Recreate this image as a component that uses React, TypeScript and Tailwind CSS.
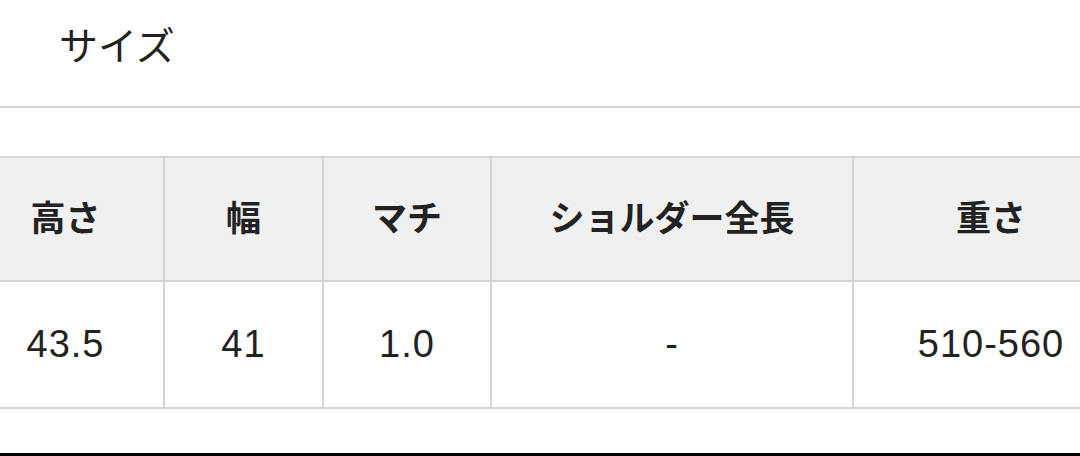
const headers = ["高さ", "幅", "マチ", "ショルダー全長", "重さ"]
const values = ["43.5", "41", "1.0", "-", "510-560"]
const widths = ["w-[197px]", "w-[159px]", "w-[168px]", "w-[362px]", "w-[276px]"]

export default function App() {
    return (
        <div className="w-[1080px] h-[456px] bg-white overflow-hidden flex flex-col text-[#222] font-['Liberation_Sans','Noto_Sans_CJK_JP',sans-serif]">
            <div className="h-[106px] pt-[20px] pl-[59px] text-[39px] leading-[54px]">サイズ</div>
            <div className="h-[2px] bg-[#d4d4d4]" />
            <div className="h-[48px]" />
            <table className="ml-[-34px] w-[1162px] min-w-[1162px] shrink-0 border-collapse table-fixed">
                <colgroup>
                    {widths.map((w, i) => (
                        <col key={i} className={w} />
                    ))}
                </colgroup>
                <thead>
                    <tr className="h-[124px] bg-[#f0f0f0]">
                        {headers.map((h) => (
                            <th key={h} className="border-2 border-[#d4d4d4] text-[35px] font-bold text-center align-middle">
                                {h}
                            </th>
                        ))}
                    </tr>
                </thead>
                <tbody>
                    <tr className="h-[127px]">
                        {values.map((v, i) => (
                            <td key={i} className="border-2 border-[#d4d4d4] text-[38px] tracking-[1px] text-center align-middle">
                                {v}
                            </td>
                        ))}
                    </tr>
                </tbody>
            </table>
            <div className="flex-1" />
            <div className="h-[3px] bg-black" />
        </div>
    )
}
